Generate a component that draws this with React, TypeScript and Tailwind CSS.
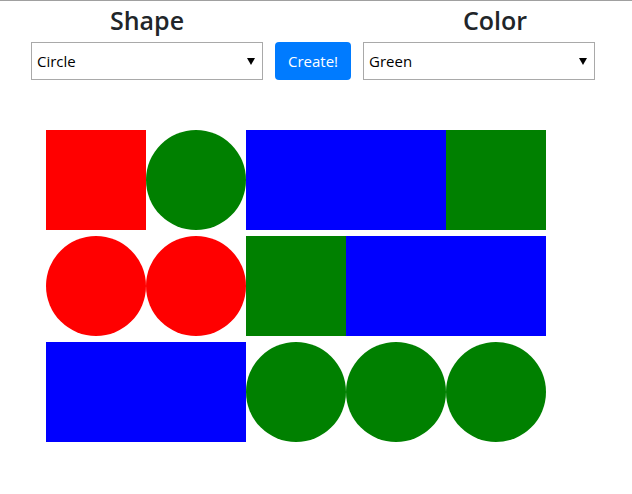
import React from 'react';

type Item = { kind: 'square' | 'circle' | 'rect'; color: string };

const rows: Item[][] = [
    [
        { kind: 'square', color: 'bg-[#ff0000]' },
        { kind: 'circle', color: 'bg-[#008000]' },
        { kind: 'rect', color: 'bg-[#0000ff]' },
        { kind: 'square', color: 'bg-[#008000]' },
    ],
    [
        { kind: 'circle', color: 'bg-[#ff0000]' },
        { kind: 'circle', color: 'bg-[#ff0000]' },
        { kind: 'square', color: 'bg-[#008000]' },
        { kind: 'rect', color: 'bg-[#0000ff]' },
    ],
    [
        { kind: 'rect', color: 'bg-[#0000ff]' },
        { kind: 'circle', color: 'bg-[#008000]' },
        { kind: 'circle', color: 'bg-[#008000]' },
        { kind: 'circle', color: 'bg-[#008000]' },
    ],
];

const Shape: React.FC<{ item: Item }> = ({ item }) => {
    const size =
        item.kind === 'rect' ? 'w-[200px] h-[100px]' : item.kind === 'circle' ? 'w-[100px] h-[100px] rounded-full' : 'w-[100px] h-[100px]';
    return <div className={`${size} ${item.color} shrink-0`} />;
};

const Select: React.FC<{ value: string }> = ({ value }) => (
    <div className="w-[232px] h-[38px] border border-[#a9a9a9] bg-white flex items-center justify-between pl-[5px] pr-[7px] text-[15px] text-black">
        <span>{value}</span>
        <svg width="8" height="7" viewBox="0 0 8 7">
            <path d="M0 0 H8 L4 7 Z" fill="#000" />
        </svg>
    </div>
);

export default function App() {
    return (
        <div
            className="w-[632px] h-[494px] bg-white border-t border-[#a0a0a0] overflow-hidden"
            style={{ fontFamily: '"Open Sans", "Noto Sans", sans-serif' }}
        >
            <div className="flex h-[40px] items-center text-[25px] font-semibold text-[#212529]">
                <div className="w-[232px] ml-[31px] text-center">Shape</div>
                <div className="w-[264px] ml-[100px] text-center">Color</div>
            </div>
            <div className="flex items-center gap-[12px] pl-[31px] mt-px">
                <Select value="Circle" />
                <button className="w-[76px] h-[38px] rounded-[4px] bg-[#007bff] text-white text-[15px]">Create!</button>
                <Select value="Green" />
            </div>
            <div className="flex flex-col gap-[6px] pl-[46px] mt-[50px]">
                {rows.map((row, i) => (
                    <div key={i} className="flex">
                        {row.map((item, j) => (
                            <Shape key={j} item={item} />
                        ))}
                    </div>
                ))}
            </div>
        </div>
    );
}
